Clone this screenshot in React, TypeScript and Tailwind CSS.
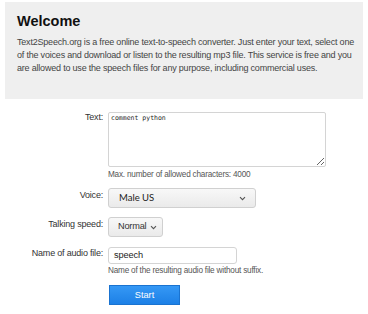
import React from 'react';

const Chevron = () => (
  <svg width="7" height="5" viewBox="0 0 7 5" className="shrink-0">
    <path d="M1 1.2l2.5 2.5 2.5-2.5" fill="none" stroke="#555" strokeWidth="1.1" />
  </svg>
);

const Label = ({ children, top = 'mt-0' }: { children: React.ReactNode; top?: string }) => (
  <div className={`w-[103px] shrink-0 text-right text-[9px] tracking-[-0.2px] leading-[13px] text-[#333] ${top}`}>{children}</div>
);

export default function App() {
  return (
    <div className="w-[368px] h-[314px] bg-white font-['Liberation_Sans',Arial,sans-serif] overflow-hidden">
      <div className="ml-[5px] mt-[2px] w-[358px] h-[97px] bg-[#efefef] pl-[12px] pt-[11px]">
        <h1 className="text-[14.5px] leading-[17px] font-bold text-[#111]">Welcome</h1>
        <p className="mt-[6px] text-[9px] tracking-[-0.2px] leading-[13px] text-[#444] pr-[6px]">
          Text2Speech.org is a free online text-to-speech converter. Just enter your text, select one of the voices and download or listen to the resulting mp3 file. This service is free and you are allowed to use the speech files for any purpose, including commercial uses.
        </p>
      </div>

      <div className="mt-[13px] flex flex-col">
        <div className="flex gap-[5px]">
          <Label top="mt-[-1px]">Text:</Label>
          <div className="flex flex-col">
            <textarea
              readOnly
              defaultValue="comment python"
              className="block w-[218px] h-[55px] border border-[#d4d4d4] rounded-[2px] px-[2px] py-[1px] font-['DejaVu_Sans_Mono',monospace] text-[6.5px] leading-[9px] text-[#222] outline-none resize-y bg-white"
            />
            <div className="mt-[2px] text-[8.2px] tracking-[-0.2px] leading-[11px] text-[#555]">Max. number of allowed characters: 4000</div>
          </div>
        </div>

        <div className="flex gap-[5px] mt-[8px] items-start">
          <Label top="mt-[1px]">Voice:</Label>
          <div className="w-[148px] h-[20px] flex items-center justify-between pl-[10px] pr-[9px] border border-[#d0d0d0] rounded-[3px] bg-gradient-to-b from-[#f8f8f8] to-[#eaeaea] font-['Lato',sans-serif] text-[9.5px] text-[#222]">
            <span>Male US</span>
            <Chevron />
          </div>
        </div>

        <div className="flex gap-[5px] mt-[9px] items-start">
          <Label top="mt-[1px]">Talking speed:</Label>
          <div className="w-[55px] h-[20px] flex items-center gap-[4px] pl-[9px] border border-[#d0d0d0] rounded-[3px] bg-gradient-to-b from-[#f8f8f8] to-[#eaeaea] text-[9.2px] tracking-[-0.2px] text-[#333]">
            <span>Normal</span>
            <Chevron />
          </div>
        </div>

        <div className="flex gap-[5px] mt-[10px] items-start">
          <Label top="mt-[0px]">Name of audio file:</Label>
          <div className="flex flex-col">
            <div className="w-[129px] h-[17px] flex items-center pl-[5px] border border-[#d4d4d4] rounded-[3px] bg-white text-[9.2px] tracking-[-0.1px] text-[#222]">
              speech
            </div>
            <div className="mt-[1px] text-[8.2px] tracking-[-0.2px] leading-[11px] text-[#555]">Name of the resulting audio file without suffix.</div>
            <button className="mt-[9px] ml-[1px] w-[71px] h-[20px] border border-[#1a73d0] bg-gradient-to-b from-[#3598f5] to-[#1c80e6] text-white text-[9.2px] leading-[18px] text-center">
              Start
            </button>
          </div>
        </div>
      </div>
    </div>
  );
}
